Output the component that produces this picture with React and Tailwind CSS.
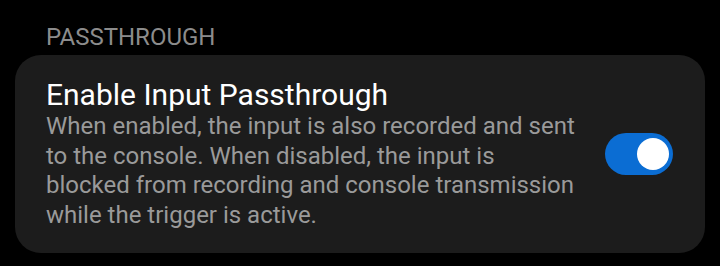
export default function App() {
  return (
    <div className="w-[720px] h-[266px] bg-black pt-[23px] px-[15px]" style={{ fontFamily: "Roboto, sans-serif" }}>
      <div className="pl-[31px] text-[24px] leading-[28px] text-[#8c8c8c]">PASSTHROUGH</div>
      <div className="mt-[4px] h-[198px] rounded-[26px] bg-[#1c1c1c] flex items-center pl-[31px] pr-[32px]">
        <div className="flex-1">
          <div className="text-[30px] leading-[34px] text-white">Enable Input Passthrough</div>
          <div className="w-[529px] text-[24px] leading-[29.5px] text-[#9a9a9a]">
            When enabled, the input is also recorded and sent to the console. When disabled, the input is blocked from recording and console transmission while the trigger is active.
          </div>
        </div>
        <div className="w-[68px] h-[42px] rounded-full bg-[#0b6dd3] flex items-center justify-end pr-[4px]">
          <div className="w-[32px] h-[32px] rounded-full bg-white" />
        </div>
      </div>
    </div>
  );
}
